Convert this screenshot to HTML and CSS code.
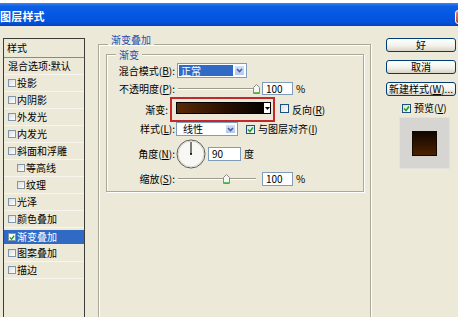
FILE: index.html
```html
<!DOCTYPE html>
<html>
<head>
  <meta charset="UTF-8">
  <meta name="viewport" content="width=device-width, initial-scale=1.0">
  <title>图层样式</title>
  <link rel="stylesheet" href="styles.css">
</head>
<body>
  <div class="window">
    <div class="titlebar">
      <span class="title">图层样式</span>
      <span class="close-btn"></span>
    </div>

    <div class="dialog">
      <!-- Style list -->
      <ul class="style-list">
        <li class="list-head">样式</li>
        <li class="list-item">混合选项:默认</li>
        <li class="list-item"><span class="check"></span>投影</li>
        <li class="list-item"><span class="check"></span>内阴影</li>
        <li class="list-item"><span class="check"></span>外发光</li>
        <li class="list-item"><span class="check"></span>内发光</li>
        <li class="list-item"><span class="check"></span>斜面和浮雕</li>
        <li class="list-item indent"><span class="check"></span>等高线</li>
        <li class="list-item indent"><span class="check"></span>纹理</li>
        <li class="list-item"><span class="check"></span>光泽</li>
        <li class="list-item"><span class="check"></span>颜色叠加</li>
        <li class="list-item selected">
          <span class="check"><svg width="7" height="7" viewBox="0 0 7 7"><polyline points="1,3.5 3,5.5 6,1.5" fill="none" stroke="#21a121" stroke-width="1.6"/></svg></span>渐变叠加
        </li>
        <li class="list-item"><span class="check"></span>图案叠加</li>
        <li class="list-item"><span class="check"></span>描边</li>
      </ul>

      <!-- Gradient overlay settings -->
      <div class="group outer">
        <div class="group-title">渐变叠加</div>
        <div class="group inner">
          <div class="group-title">渐变</div>

          <div class="row row-blend">
            <span class="field-label">混合模式(<u>B</u>):</span>
            <span class="select select-blend">
              <span class="select-value">正常</span>
              <span class="select-btn"><svg width="7" height="5" viewBox="0 0 7 5"><polyline points="1,1 3.5,3.5 6,1" fill="none" stroke="#4d6185" stroke-width="1.6"/></svg></span>
            </span>
          </div>

          <div class="row row-opacity">
            <span class="field-label">不透明度(<u>P</u>):</span>
            <span class="slider">
              <span class="slider-thumb" style="left: 75px"><svg width="7" height="10" viewBox="0 0 7 10"><path d="M0.5 3.5 L3.5 0.5 L6.5 3.5 V9.5 H0.5 Z" fill="#f6f6f2" stroke="#8a8a80"/><line x1="1" y1="8.8" x2="6" y2="8.8" stroke="#3cb43c" stroke-width="1.2"/></svg></span>
            </span>
            <span class="num-input num-short">100</span>
            <span class="unit">%</span>
          </div>

          <div class="row row-gradient">
            <span class="field-label label-gradient">渐变:</span>
            <span class="highlight">
              <span class="gradient-pick">
                <span class="gradient-swatch"></span>
                <span class="gradient-btn"><svg width="5" height="3" viewBox="0 0 5 3"><polygon points="0,0 5,0 2.5,3" fill="#000"/></svg></span>
              </span>
            </span>
            <span class="check box-check reverse-check"></span>
            <span class="check-text">反向(<u>R</u>)</span>
          </div>

          <div class="row row-style">
            <span class="field-label">样式(<u>L</u>):</span>
            <span class="select select-style">
              <span class="select-text">线性</span>
              <span class="select-btn"><svg width="7" height="5" viewBox="0 0 7 5"><polyline points="1,1 3.5,3.5 6,1" fill="none" stroke="#4d6185" stroke-width="1.6"/></svg></span>
            </span>
            <span class="check box-check align-check"><svg width="7" height="7" viewBox="0 0 7 7"><polyline points="1,3.5 3,5.5 6,1.5" fill="none" stroke="#21a121" stroke-width="1.6"/></svg></span>
            <span class="check-text">与图层对齐(<u>I</u>)</span>
          </div>

          <div class="row row-angle">
            <span class="field-label">角度(<u>N</u>):</span>
            <span class="dial">
              <svg width="30" height="30" viewBox="0 0 30 30">
                <circle cx="15" cy="15" r="14" fill="#f7f7f4" stroke="#5a5a55"/>
                <circle cx="15" cy="15" r="12.8" fill="none" stroke="#d8d6cc"/>
                <line x1="15" y1="15" x2="15" y2="3" stroke="#000"/>
                <circle cx="15" cy="15" r="1" fill="#000"/>
              </svg>
            </span>
            <span class="num-input num-angle">90</span>
            <span class="unit">度</span>
          </div>

          <div class="row row-scale">
            <span class="field-label">缩放(<u>S</u>):</span>
            <span class="slider">
              <span class="slider-thumb" style="left: 45px"><svg width="7" height="10" viewBox="0 0 7 10"><path d="M0.5 3.5 L3.5 0.5 L6.5 3.5 V9.5 H0.5 Z" fill="#f6f6f2" stroke="#8a8a80"/><line x1="1" y1="8.8" x2="6" y2="8.8" stroke="#3cb43c" stroke-width="1.2"/></svg></span>
            </span>
            <span class="num-input">100</span>
            <span class="unit">%</span>
          </div>
        </div>
      </div>

      <!-- Buttons and preview -->
      <div class="side">
        <button class="btn">好</button>
        <button class="btn">取消</button>
        <button class="btn">新建样式(<u>W</u>)...</button>
        <div class="preview-toggle">
          <span class="check box-check"><svg width="7" height="7" viewBox="0 0 7 7"><polyline points="1,3.5 3,5.5 6,1.5" fill="none" stroke="#21a121" stroke-width="1.6"/></svg></span>
          <span class="check-text">预览(<u>V</u>)</span>
        </div>
        <div class="preview-box">
          <span class="preview-swatch"></span>
        </div>
      </div>
    </div>
  </div>
</body>
</html>
```

FILE: styles.css
```css
/* Base */
* {
  box-sizing: border-box;
}

body {
  margin: 0;
  width: 458px;
  height: 317px;
  overflow: hidden;
  background: #fff;
  font-family: "Noto Sans CJK SC", sans-serif;
  font-size: 10px;
  line-height: 12px;
  color: #000;
}

u {
  text-decoration: underline;
}

.window {
  padding-top: 3px;
}

/* Title bar */
.titlebar {
  height: 23px;
  display: flex;
  align-items: center;
  overflow: hidden;
  color: #fff;
  background: linear-gradient(#3a86f2 0%, #0d60e2 14%, #0558e4 50%, #0451d9 84%, #0343bd 100%);
}

.title {
  font-size: 11px;
  font-weight: bold;
  padding-top: 2px;
  letter-spacing: 0.2px;
}

.close-btn {
  margin-left: auto;
  margin-right: -13px;
  margin-top: 4px;
  width: 16px;
  height: 14px;
  border: 1px solid #fff;
  border-radius: 3px;
  background: linear-gradient(#ea8a68, #c8401d);
}

/* Dialog body */
.dialog {
  height: 291px;
  display: flex;
  align-items: flex-start;
  padding: 12px 0 0 3px;
  overflow: hidden;
  background: #ece9d8;
}

/* Style list */
.style-list {
  list-style: none;
  margin: 0;
  padding: 0;
  width: 82px;
  height: 300px;
  flex: none;
  border: 1px solid #3c3c38;
}

.list-head {
  height: 19px;
  padding: 3px 0 0 3px;
  border-bottom: 1px solid #8c8a80;
}

.list-item {
  height: 17px;
  display: flex;
  align-items: center;
  padding-left: 4px;
  border-bottom: 1px solid #f7f5ee;
}

.list-item.indent {
  padding-left: 13px;
}

.list-item .check {
  width: 8px;
  height: 8px;
  margin-right: 1px;
  border-color: #8296ab;
}

.list-item.selected {
  color: #fff;
  background: #316ac5;
  background-clip: padding-box;
  border-top: 2px solid #ece9d8;
  border-bottom-color: #ece9d8;
}

.list-item.selected .check {
  background: #fff;
}

/* Checkboxes */
.check {
  display: inline-flex;
  align-items: center;
  justify-content: center;
  flex: none;
  border: 1px solid #1c5180;
  background: linear-gradient(135deg, #dcdcd6, #fff);
}

.box-check {
  width: 9px;
  height: 9px;
}

.check-text {
  margin-left: 3px;
}

/* Group boxes */
.group {
  border: 1px solid #aca899;
  box-shadow: inset 1px 1px 0 #fff, 1px 1px 0 #fff;
}

.group-title {
  width: max-content;
  height: 10px;
  padding: 0 3px;
  line-height: 10px;
  color: #1e4fb0;
  background: #ece9d8;
}

.outer {
  margin: 6px 0 0 13px;
  width: 273px;
  height: 300px;
  flex: none;
  padding: 0 6px 0 7px;
}

.outer > .group-title {
  margin: -10px 0 0 2px;
}

.inner {
  margin-top: 9px;
  width: 258px;
  height: 138px;
}

.inner > .group-title {
  margin: -5px 0 0 9px;
}

/* Field rows */
.row {
  display: flex;
  align-items: center;
}

.field-label {
  width: 68px;
  flex: none;
  text-align: right;
}

.label-gradient {
  width: 61px;
}

.row-blend {
  height: 15px;
  margin-top: 3px;
}

.row-opacity {
  height: 13px;
  margin-top: 4px;
}

.row-gradient {
  height: 25px;
  margin-top: 2px;
}

.row-style {
  height: 14px;
}

.row-angle {
  height: 30px;
  margin-top: 3px;
}

.row-scale {
  height: 14px;
  margin-top: 3px;
}

/* Combo boxes */
.select {
  display: flex;
  height: 100%;
  padding: 1px;
  border: 1px solid #7f9db9;
  background: #fff;
}

.select-blend {
  width: 70px;
  margin-left: 2px;
}

.select-style {
  width: 62px;
  margin-left: 1px;
}

.select-value {
  flex: 1;
  margin-right: 1px;
  padding-left: 2px;
  color: #fff;
  background: #316ac5;
  line-height: 11px;
}

.select-text {
  flex: 1;
  padding-left: 5px;
  line-height: 10px;
}

.select-btn {
  width: 11px;
  display: flex;
  align-items: center;
  justify-content: center;
  border: 1px solid #fff;
  border-radius: 1px;
  background: linear-gradient(#d2dffc, #b2c7f6);
}

/* Sliders */
.slider {
  position: relative;
  width: 78px;
  height: 2px;
  margin-left: 3px;
  border-top: 1px solid #9d9b90;
  border-bottom: 1px solid #fff;
}

.slider-thumb {
  position: absolute;
  top: -5px;
  display: flex;
}

/* Number inputs */
.num-input {
  width: 31px;
  height: 14px;
  margin-left: 6px;
  padding: 0 0 0 3px;
  border: 1px solid #7f9db9;
  background: #fff;
  line-height: 12px;
}

.num-short {
  height: 13px;
  line-height: 11px;
}

.num-angle {
  width: 33px;
  margin-left: 2px;
}

.unit {
  margin-left: 3px;
}

/* Gradient picker with red annotation box */
.highlight {
  margin-left: 2px;
  padding: 3px 2px 6px 4px;
  border: 2px solid #c4282c;
}

.gradient-pick {
  display: flex;
  width: 95px;
  height: 12px;
  border: 1px solid #000;
}

.gradient-swatch {
  flex: 1;
  background: linear-gradient(to right, #5c2a06, #2a1000 55%, #050200);
}

.gradient-btn {
  width: 6px;
  display: flex;
  align-items: center;
  justify-content: center;
  background: #fff;
}

.reverse-check {
  margin-left: 5px;
  margin-top: -2px;
}

/* Style row checkbox */
.align-check {
  margin-left: 8px;
}

/* Angle dial */
.dial {
  display: flex;
  margin-left: 1px;
}

/* Right column */
.side {
  margin-left: 15px;
  width: 70px;
  flex: none;
  display: flex;
  flex-direction: column;
}

.btn {
  height: 14px;
  margin: 0 0 8px 0;
  padding: 0;
  font-family: inherit;
  font-size: 10px;
  line-height: 12px;
  color: #000;
  border: 1px solid #003c74;
  border-radius: 3px;
  background: linear-gradient(#fff, #f3f2ec 55%, #d9d4c7);
}

.preview-toggle {
  height: 12px;
  margin: -2px 0 0 16px;
  display: flex;
  align-items: center;
}

.preview-box {
  width: 51px;
  height: 52px;
  margin: 3px 0 0 13px;
  display: flex;
  align-items: center;
  justify-content: center;
  background: #d6d5d2;
  border: 1px solid #e2e1dd;
}

.preview-swatch {
  width: 25px;
  height: 25px;
  border: 1px solid #120800;
  background: linear-gradient(#120600, #2c1200 45%, #4c2200);
}
```
